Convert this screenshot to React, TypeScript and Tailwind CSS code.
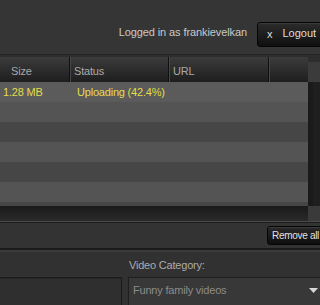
import React from "react";

const rows = [
  { bg: "bg-[#5b5b5b]", size: "1.28 MB", status: "Uploading (42.4%)" },
  { bg: "bg-[#545454]" },
  { bg: "bg-[#464646]" },
  { bg: "bg-[#545454]" },
  { bg: "bg-[#464646]" },
  { bg: "bg-[#545454]" },
];

export default function App() {
  return (
    <div className="w-[320px] h-[305px] overflow-hidden bg-[#353535] flex flex-col font-['Liberation_Sans',Arial,sans-serif] text-[11px] leading-[13px]">
      {/* top bar */}
      <div className="h-[54px] shrink-0 flex items-end justify-end">
        <span className="mb-[15px] text-[#c9c9c9] tracking-[-0.1px]">Logged in as frankievelkan</span>
        <button className="ml-[10px] mr-[-12px] mb-[7px] h-[25px] w-[75px] shrink-0 rounded-[3px] border border-[#050505] bg-gradient-to-b from-[#2c2c2c] to-[#101010] flex items-center pl-[9px] pb-[2px] text-[#dedede] shadow-[inset_0_1px_0_#3a3a3a]">
          <span className="text-[11px] mt-[2px]">x</span>
          <span className="ml-[10px] text-[11px]">Logout</span>
        </button>
      </div>
      <div className="h-px shrink-0 bg-[#232323]" />
      <div className="h-[2px] shrink-0 bg-[#2d2d2d]" />

      {/* table */}
      <div className="flex shrink-0">
        <div className="w-[308px] flex flex-col">
          <div className="h-[25px] flex bg-gradient-to-b from-[#3c3c3c] to-[#1e1e1e] text-[#a9a9a9] tracking-[-0.2px]">
            <div className="w-[69px] pl-[11px] pt-[8px]">Size</div>
            <div className="w-px bg-[#101010]" />
            <div className="w-[98px] pl-[3px] pt-[8px] border-l border-[#474747]">Status</div>
            <div className="w-px bg-[#101010]" />
            <div className="w-[99px] pl-[3px] pt-[8px] border-l border-[#474747]">URL</div>
            <div className="w-px bg-[#101010]" />
            <div className="flex-1 border-l border-[#474747]" />
          </div>
          {rows.map((r, i) => (
            <div key={i} className={`h-[20px] flex items-center text-[#e6dc4a] tracking-[-0.2px] ${r.bg}`}>
              <div className="w-[70px] pl-[3px]">{r.size ?? ""}</div>
              <div className="pl-[7px]">{r.status ?? ""}</div>
            </div>
          ))}
          <div className="h-[4px] bg-[#464646]" />
          <div className="h-[15px] bg-gradient-to-b from-[#1a1a1a] to-[#2a2a2a]" />
        </div>
        <div className="w-[12px] flex flex-col">
          <div className="h-[5px] bg-[#2d2d2d]" />
          <div className="h-[20px] bg-[#3b3b3b]" />
          <div className="h-[124px] bg-[#1f1f1f] border-l-[5px] border-[#1a1a1a]" />
          <div className="h-[15px] bg-[#3a3a3a]" />
        </div>
      </div>

      <div className="h-px shrink-0 bg-[#4a4a4a]" />
      <div className="h-px shrink-0 bg-[#1c1c1c]" />

      {/* toolbar */}
      <div className="h-[25px] shrink-0 bg-[#333333] flex items-center justify-end">
        <button className="mr-[-10px] h-[19px] w-[63px] shrink-0 rounded-[3px] border border-[#050505] bg-gradient-to-b from-[#2a2a2a] to-[#0e0e0e] flex items-center pl-[4px] text-[10px] tracking-[-0.3px] text-[#e2e2e2] shadow-[inset_0_1px_0_#3a3a3a]">
          Remove all
        </button>
      </div>
      <div className="h-[2px] shrink-0 bg-[#1b1b1b]" />
      <div className="h-[2px] shrink-0 bg-[#3a3a3a]" />

      {/* form */}
      <div className="flex-1 bg-[#313131] flex gap-[6px] pt-[7px]">
        <div className="w-[122px] shrink-0 flex flex-col">
          <div className="h-[18px]" />
          <div className="h-[30px] ml-[-2px] border border-[#1c1c1c] bg-[#2f2f2f] shadow-[inset_0_1px_0_#262626]" />
        </div>
        <div className="flex-1 flex flex-col tracking-[-0.2px]">
          <div className="h-[18px] pl-[1px] text-[#ababab]">Video Category:</div>
          <div className="h-[30px] mr-[-4px] border border-[#1e1e1e] bg-[#383838] flex items-start pt-[6px] pl-[4px] text-[#8c8c8c]">
            <span className="flex-1">Funny family videos</span>
            <svg width="9" height="5" viewBox="0 0 9 5" className="mr-[5px] mt-[4px]">
              <polygon points="0,0 9,0 4.5,5" fill="#d8d8d8" />
            </svg>
          </div>
        </div>
      </div>
    </div>
  );
}
